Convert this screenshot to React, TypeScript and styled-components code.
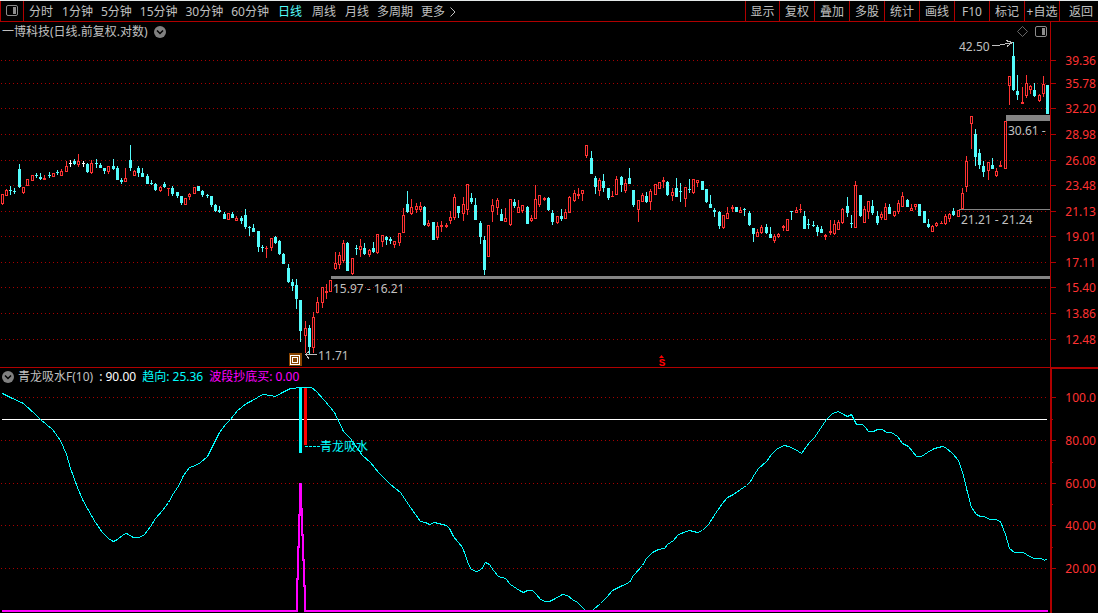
import React from "react";
import styled, { createGlobalStyle } from "styled-components";

const RED = "#b00000";
const UP = "#ff3232";
const DOWN = "#54fcfc";
const TEXT = "#c0c0c0";
const GREY = "#848484";
const CYAN = "#00ffff";
const MAGENTA = "#ff00ff";
const FONT = '"Noto Sans", "Noto Sans CJK SC", sans-serif';

const GlobalStyle = createGlobalStyle`
  *, *::before, *::after { box-sizing: border-box; }
  html, body { margin: 0; background: #000; }
  body { font-family: ${FONT}; font-size: 12px; line-height: 16px; color: ${TEXT}; }
`;

const Page = styled.div`
  display: flex;
  flex-direction: column;
  min-height: 100vh;
  background: #000;
`;

const Toolbar = styled.header`
  display: flex;
  justify-content: space-between;
  height: 22px;
  border-top: 1px solid #e4e8e8;
  border-bottom: 1px solid ${RED};
`;

const Periods = styled.nav`
  display: flex;
  align-items: stretch;
`;

const Actions = styled.div`
  display: flex;
  align-items: stretch;
`;

const BareButton = styled.button`
  appearance: none;
  display: flex;
  align-items: center;
  justify-content: center;
  margin: 0;
  padding: 0;
  border: 0;
  background: none;
  color: inherit;
  font: inherit;
  white-space: nowrap;
  cursor: pointer;
`;

const LayoutButton = styled(BareButton)`
  width: 24px;
  border-left: 1px solid ${RED};
  border-right: 1px solid ${RED};
`;

const PeriodButton = styled(BareButton)<{ $roomy?: boolean; $active?: boolean }>`
  gap: 5px;
  padding: 2px ${(p) => (p.$roomy ? 5 : 4)}px 0;
  color: ${(p) => (p.$active ? DOWN : TEXT)};
`;

const ActionButton = styled(BareButton)`
  width: 35px;
  padding-top: 2px;
  border-left: 1px solid ${RED};

  &:first-child {
    width: 34px;
  }

  &:last-child {
    width: 39px;
    padding-left: 4px;
  }
`;

const Panel = styled.section`
  display: flex;
  flex-direction: column;
`;

const PanelHeader = styled.div`
  display: grid;
  grid-template-columns: minmax(0, 1050fr) minmax(0, 48fr);
  height: 18px;
`;

const HeaderMain = styled.div<{ $lower?: boolean }>`
  display: flex;
  align-items: center;
  gap: 6px;
  padding: ${(p) => (p.$lower ? 0 : 2)}px 3px 0 2px;
  border-top: ${(p) => (p.$lower ? `1px solid ${RED}` : "0")};
  white-space: nowrap;
`;

const AxisCorner = styled.div<{ $lower?: boolean }>`
  border-left: ${(p) => (p.$lower ? 2 : 1)}px solid ${RED};
  border-top: ${(p) => (p.$lower ? `2px solid ${RED}` : "0")};
`;

const Title = styled.h1`
  margin: 0;
  font-size: 12px;
  line-height: 16px;
  font-weight: 400;
`;

const Indicator = styled.div`
  display: flex;
  align-items: center;
  gap: 4px;
`;

const IndicatorName = styled.h2`
  margin: 0;
  font-size: 12px;
  line-height: 16px;
  font-weight: 400;
`;

const Reading = styled.span<{ $color: string }>`
  color: ${(p) => p.$color};
`;

const HeaderTools = styled.div`
  display: flex;
  align-items: center;
  gap: 6px;
  margin-left: auto;
`;

const Chart = styled.svg`
  display: block;
  width: 100%;
  height: auto;
  overflow: visible;
  font-family: ${FONT};
  font-size: 12px;
`;

const Icon = styled.svg`
  display: block;
  flex: none;
`;

const PanelIcon = () => (
  <Icon width="12" height="12" viewBox="0 0 12 12" fill="none" aria-hidden="true">
    <rect x="0.5" y="0.5" width="11" height="10" rx="1.5" stroke="#8c8c8c" />
    <rect x="7" y="2" width="3" height="7" fill="#8c8c8c" />
  </Icon>
);

const FoldIcon = () => (
  <Icon width="12" height="12" viewBox="0 0 12 12" fill="none" aria-hidden="true">
    <circle cx="6" cy="6" r="6" fill="#808080" />
    <path d="M3 4.5 L6 7.5 L9 4.5" stroke="#000" strokeWidth="1.5" />
  </Icon>
);

const DiamondIcon = () => (
  <Icon width="12" height="12" viewBox="0 0 12 12" fill="none" aria-hidden="true">
    <path d="M5.5 0.5 L10.5 5.5 L5.5 10.5 L0.5 5.5 Z" stroke="#808080" strokeWidth="0.8" />
  </Icon>
);

const MoreIcon = () => (
  <Icon width="6" height="10" viewBox="0 0 6 10" fill="none" aria-hidden="true">
    <path d="M0.5 0.5 L5 5 L0.5 9.5" stroke={TEXT} />
  </Icon>
);

const periods = [
  { label: "分时", roomy: true },
  { label: "1分钟" },
  { label: "5分钟" },
  { label: "15分钟" },
  { label: "30分钟" },
  { label: "60分钟" },
  { label: "日线", roomy: true, active: true },
  { label: "周线", roomy: true },
  { label: "月线" },
  { label: "多周期" },
];

const actions = ["显示", "复权", "叠加", "多股", "统计", "画线", "F10", "标记", "+自选", "返回"];

/* One bar per entry: kind (u up, d down, w flat), x, high, body top, body bottom, low. */
const bars = `
u 2 194 194 204 205;u 6 189 190 196 196;d 10 186 190 191 195;d 14 188 191 192 194;d 19 164 169 187 188;
u 23 187 187 193 194;u 27 179 179 186 186;u 32 175 175 181 181;d 36 173 175 176 178;d 40 173 177 179 180;
u 44 175 178 180 180;d 49 172 175 176 178;u 53 173 173 177 177;d 57 170 172 173 175;u 61 169 171 176 176;
u 66 161 166 172 172;w 70 160 163 164 167;d 74 159 161 164 165;u 78 154 161 165 167;w 83 161 163 164 167;
d 87 163 164 172 173;u 91 160 163 173 174;d 96 159 163 164 168;d 100 163 165 168 168;d 104 168 168 171 174;
u 108 166 166 172 174;d 113 159 166 169 170;d 117 166 168 180 180;d 121 178 180 182 184;u 125 168 178 182 182;
d 130 145 160 168 171;u 134 170 171 176 176;d 138 166 168 173 177;d 142 168 173 177 177;d 147 174 176 184 184;
d 151 180 183 184 185;d 155 183 184 190 191;u 160 186 187 191 192;d 164 182 184 187 188;u 168 188 188 189 196;
d 172 186 188 194 196;d 177 192 192 196 198;d 181 196 196 203 205;u 185 198 198 205 205;u 189 193 194 197 200;
u 194 187 187 194 194;d 198 186 186 191 191;d 202 190 191 195 197;d 207 194 195 196 198;d 211 196 196 205 207;
d 215 204 205 211 212;d 219 206 210 212 213;d 224 212 214 219 219;u 228 213 213 220 220;d 232 212 214 218 218;
u 236 216 218 221 221;d 241 216 218 221 224;d 245 209 215 227 229;d 249 226 227 228 236;d 253 224 228 232 232;
d 258 231 231 247 252;d 262 245 247 248 252;u 266 246 248 249 258;u 271 238 238 248 251;d 275 236 237 243 244;
d 279 240 241 254 255;d 283 253 254 264 264;d 288 264 268 282 283;d 292 279 282 286 291;d 296 279 285 299 309;
d 300 300 300 331 342;u 305 321 328 336 353;d 309 325 328 347 354;u 313 312 317 348 353;u 317 297 302 313 313;
u 322 287 287 303 308;u 326 284 291 293 299;u 330 280 280 292 292;u 335 252 263 269 270;u 339 252 255 265 269;
u 343 240 243 261 263;d 347 242 243 271 271;u 352 258 258 274 275;d 356 245 248 249 255;u 360 239 246 250 257;
d 364 243 248 254 255;u 369 249 250 255 257;d 373 242 248 252 253;u 377 234 234 253 254;u 382 235 235 242 247;
d 386 236 237 240 245;d 390 237 239 241 244;u 394 241 241 245 248;u 399 233 233 243 246;u 403 208 215 233 233;
d 407 191 204 212 213;u 411 199 207 214 215;u 416 203 206 210 213;u 420 202 206 210 212;d 424 206 207 225 226;
u 428 220 223 226 227;d 433 222 222 240 240;u 437 222 226 238 240;u 441 221 225 227 232;u 446 223 225 227 228;
u 450 211 217 221 224;u 454 194 197 218 220;d 458 206 206 213 218;u 463 197 204 214 221;u 467 184 184 210 215;
d 471 193 198 202 204;d 475 198 205 220 220;d 480 221 223 237 244;d 484 236 240 270 275;u 488 225 225 257 257;
u 492 199 205 212 222;u 497 198 200 208 215;d 501 209 214 221 221;u 505 208 218 222 222;u 510 199 199 225 226;
d 514 199 202 206 208;u 518 200 207 213 213;u 522 205 205 211 213;d 527 206 207 224 224;u 531 215 218 221 222;
u 535 185 199 219 219;u 539 195 195 205 207;u 544 197 198 200 201;d 548 197 198 210 211;d 552 210 213 222 225;
u 557 216 216 223 224;d 561 209 216 219 221;u 565 209 212 219 219;u 569 196 197 213 213;u 574 190 193 201 202;
u 578 188 194 196 199;u 582 190 190 194 201;u 586 145 145 156 158;d 591 151 158 174 174;d 595 176 178 187 194;
u 599 178 180 191 196;d 603 174 181 188 192;d 608 188 188 198 200;u 612 191 196 197 197;u 616 176 179 195 195;
d 621 176 177 185 192;u 625 179 183 191 193;d 629 168 178 184 184;d 633 190 190 205 207;u 638 200 200 210 222;
u 642 193 195 202 202;d 646 192 196 202 203;u 650 189 191 202 210;u 655 184 184 195 195;u 659 182 182 189 189;
u 663 177 180 182 188;d 667 181 182 195 196;u 672 188 192 196 201;d 676 178 188 197 197;d 680 183 191 192 202;
u 685 187 187 199 207;d 689 179 189 190 193;u 693 179 179 193 194;u 697 180 180 183 187;d 702 181 181 190 190;
d 706 189 189 202 203;d 710 195 204 208 208;d 714 208 210 212 217;d 719 211 212 226 229;u 723 215 215 228 229;
u 727 207 213 219 219;u 732 205 207 209 212;d 736 207 207 212 212;u 740 207 210 213 213;d 744 208 209 210 216;
d 749 211 213 225 226;d 753 228 228 234 242;u 757 229 232 237 237;u 761 225 227 233 234;d 766 224 227 233 234;
d 770 227 234 238 238;u 774 234 236 241 243;u 778 233 234 237 238;u 783 225 226 228 231;u 787 219 219 231 231;
d 791 211 211 212 220;u 796 207 210 213 213;u 800 204 209 210 213;d 804 211 216 229 229;d 808 219 224 225 229;
d 813 221 225 226 227;d 817 225 227 232 236;d 821 226 229 233 233;u 825 234 235 237 240;u 830 220 231 233 235;
u 834 220 224 234 235;u 838 220 222 230 230;u 842 208 209 223 224;d 847 197 206 213 217;d 851 215 223 224 228;
u 855 181 185 228 228;d 860 195 195 216 217;u 864 206 209 223 223;u 868 201 201 212 219;d 872 200 206 213 215;
d 877 211 216 223 225;u 881 212 214 218 220;u 885 203 207 220 220;d 889 204 207 214 214;u 894 211 211 216 217;
u 898 200 203 212 214;u 902 192 196 207 207;d 907 199 200 207 207;u 911 204 208 211 211;u 915 204 204 207 210;
d 919 204 204 216 216;d 924 211 211 223 223;d 928 219 224 227 228;u 932 225 226 232 232;u 936 222 223 226 227;
u 941 221 223 224 224;u 945 214 216 224 225;u 949 213 214 219 222;d 953 208 211 215 216;u 958 210 210 217 217;
u 962 188 193 209 209;u 966 156 161 187 192;u 971 116 116 124 149;d 975 129 134 157 166;d 979 149 153 165 169;
d 983 161 166 172 177;u 988 162 162 171 180;d 992 158 165 169 169;u 996 168 171 176 177;u 1000 161 165 167 167;
u 1005 121 121 169 169;u 1009 76 76 86 105;d 1013 42 56 90 91;d 1017 75 91 95 100;u 1022 87 102 104 104;
u 1026 75 83 96 98;u 1030 85 86 90 94;d 1034 83 90 96 97;u 1039 94 95 101 102;u 1043 76 84 94 97;
d 1047 85 85 114 114`
  .split(";")
  .map((entry) => {
    const [kind, ...numbers] = entry.trim().split(" ");
    const [x, high, top, bottom, low] = numbers.map(Number);
    return { kind, x, high, top, bottom, low };
  });

const barColors: Record<string, string> = { u: UP, d: DOWN, w: "#ffffff" };

const Bar = ({ kind, x, high, top, bottom, low }: (typeof bars)[number]) => {
  const color = barColors[kind];
  const hollow = kind === "u" && bottom - top > 2;
  return (
    <g fill={color}>
      {top > high && <rect x={x} y={high} width="1" height={top - high} />}
      {low > bottom && <rect x={x} y={bottom} width="1" height={low - bottom} />}
      {hollow ? (
        <path
          fillRule="evenodd"
          d={`M${x - 1} ${top}h3v${bottom - top}h-3z M${x} ${top + 1}v${bottom - top - 2}h1v${-(bottom - top - 2)}z`}
        />
      ) : (
        <rect x={x - 1} y={top} width="3" height={bottom - top} />
      )}
    </g>
  );
};

const priceTicks: [string, number][] = [
  ["39.36", 60], ["35.78", 83], ["32.20", 108], ["28.98", 134], ["26.08", 160], ["23.48", 185],
  ["21.13", 211], ["19.01", 236], ["17.11", 262], ["15.40", 287], ["13.86", 313], ["12.48", 339],
];

const indicatorTicks: [string, number][] = [
  ["100.0", 397], ["80.00", 440], ["60.00", 483], ["40.00", 525], ["20.00", 568],
];

const Scale = ({ ticks, tickStart }: { ticks: [string, number][]; tickStart: number }) => (
  <>
    {ticks.map(([label, y]) => (
      <g key={label}>
        <line x1="1" x2="1048" y1={y + 0.5} y2={y + 0.5} stroke="#a80000" strokeDasharray="1 3" />
        <rect x={tickStart} y={y} width={1056 - tickStart} height="1" fill={RED} />
        <text x="1096" y={y + 5} textAnchor="end" fill={UP}>{label}</text>
      </g>
    ))}
  </>
);

const trend =
  "2,393 10,397 23,403 35,414 40,419 52,429 60,440 66,454 70,468 77,487 82,499 87,508 95,522 102,532 108,538 " +
  "111,540 113,541 117,539 123,534 126,533 133,537 139,537 144,534 150,526 155,518 162,510 168,502 173,493 " +
  "179,484 183,475 189,467 195,465 200,462 207,456 212,446 219,432 225,424 230,419 237,410 246,403 252,400 " +
  "262,394 270,395 275,396 282,392 290,388 302,387 311,387 316,391 324,400 334,412 343,431 350,438 357,448 " +
  "362,455 370,462 378,472 390,484 400,492 410,507 420,521 425,522 429,524 434,522 446,525 449,528 453,536 " +
  "462,547 465,555 468,564 471,569 476,571 481,569 485,562 489,564 493,570 498,576 505,578 510,584 519,590 " +
  "523,592 527,590 532,590 536,594 540,599 545,601 549,601 555,598 562,594 567,595 572,599 577,602 582,607 " +
  "586,611 590,611 593,609 600,603 607,596 612,590 620,586 629,582 633,575 642,565 646,558 652,552 658,549 " +
  "664,548 667,544 673,540 678,534 689,530 697,532 702,530 708,524 715,513 722,503 727,497 733,494 740,489 " +
  "746,485 750,481 754,474 758,468 766,461 771,454 777,448 784,445 788,446 795,449 801,453 809,442 814,437 " +
  "820,428 826,419 832,413 838,411 843,414 847,416 851,414 856,424 862,424 865,427 868,431 873,431 877,429 " +
  "882,429 886,432 891,432 897,436 902,443 908,446 912,451 916,456 921,456 927,452 934,448 942,446 945,447 " +
  "952,453 958,460 963,475 967,492 971,507 976,514 980,516 984,516 989,519 995,519 1000,521 1005,534 " +
  "1009,548 1014,552 1023,552 1029,556 1034,558 1041,558 1044,560 1047,558";

const PriceChart = () => (
  <Chart viewBox="0 40 1098 327" role="img" aria-label="一博科技 日线">
    <g shapeRendering="crispEdges">
      <Scale ticks={priceTicks} tickStart={1051} />
      <rect x="1050" y="40" width="1" height="327" fill={RED} />
      <rect x="331" y="276" width="719" height="3" fill={GREY} />
      <rect x="959" y="209" width="91" height="1" fill={GREY} />
      <rect x="1006" y="115" width="44" height="6" fill={GREY} />
      {bars.map((bar) => (
        <Bar key={bar.x} {...bar} />
      ))}
    </g>

    <g fill={TEXT}>
      <text x="959" y="51">42.50</text>
      <text x="1008" y="135">30.61 -</text>
      <text x="961" y="224">21.21 - 21.24</text>
      <text x="333" y="293">15.97 - 16.21</text>
      <text x="318" y="360">11.71</text>
    </g>

    <g stroke={TEXT} fill="none" shapeRendering="crispEdges">
      <path d="M992 45.5 L998 45.5 L1012 42.5 M1006 40.5 L1012 42.5 L1007 46.5" />
      <path d="M317 354.5 L306 354.5 M309 351.5 L305.5 354.5 L309 358.5" />
    </g>

    <g shapeRendering="crispEdges">
      <rect x="289" y="353" width="13" height="13" fill="#884400" />
      <path
        fill="#fff"
        fillRule="evenodd"
        d="M290 355h10v10h-10z M291 356v8h8v-8z M292 357h6v6h-6z M293 358v4h4v-4z"
      />
    </g>

    <g fill="#ff0000">
      <path d="M659 358 L661.5 355 L664 358 Z" />
      <text x="662" y="366" textAnchor="middle" fontFamily="Liberation Mono" fontSize="11" fontWeight="700">S</text>
    </g>
  </Chart>
);

const IndicatorChart = () => (
  <Chart viewBox="0 385 1098 228" role="img" aria-label="青龙吸水">
    <g shapeRendering="crispEdges">
      <Scale ticks={indicatorTicks} tickStart={1052} />
      {[419, 462, 504, 547].map((y) => (
        <rect key={y} x="1052" y={y} width="1" height="1" fill={RED} />
      ))}
      <rect x="1050" y="385" width="2" height="228" fill={RED} />
      <rect x="2" y="419" width="1045" height="1" fill="#fff" />
      <polyline points={trend} transform="translate(0.5 0.5)" fill="none" stroke={CYAN} />
      <rect x="299" y="387" width="3" height="66" fill={CYAN} />
      <rect x="304" y="388" width="3" height="57" fill="#ff0000" />
      <line x1="305" x2="320" y1="446.5" y2="446.5" stroke={CYAN} strokeDasharray="3 1" />
      <path
        d="M2 611 H297 V579 H298 V547 H299 V515 H300 V484 H301 V509 H302 V535 H303 V560 H304 V586 H305 V611 H1048"
        fill="none"
        stroke={MAGENTA}
        strokeWidth="2"
      />
    </g>
    <text x="320" y="451" fill={CYAN}>青龙吸水</text>
  </Chart>
);

export default function App() {
  return (
    <Page>
      <GlobalStyle />
      <Toolbar>
        <Periods aria-label="周期">
          <LayoutButton type="button" aria-label="侧栏">
            <PanelIcon />
          </LayoutButton>
          {periods.map(({ label, roomy, active }) => (
            <PeriodButton key={label} type="button" $roomy={roomy} $active={active} aria-pressed={!!active}>
              {label}
            </PeriodButton>
          ))}
          <PeriodButton type="button">
            更多
            <MoreIcon />
          </PeriodButton>
        </Periods>
        <Actions>
          {actions.map((label) => (
            <ActionButton key={label} type="button">{label}</ActionButton>
          ))}
        </Actions>
      </Toolbar>

      <main>
        <Panel>
          <PanelHeader>
            <HeaderMain>
              <Title>一博科技(日线.前复权.对数)</Title>
              <BareButton type="button" aria-label="展开">
                <FoldIcon />
              </BareButton>
              <HeaderTools>
                <BareButton type="button" aria-label="标注">
                  <DiamondIcon />
                </BareButton>
                <BareButton type="button" aria-label="右侧栏">
                  <PanelIcon />
                </BareButton>
              </HeaderTools>
            </HeaderMain>
            <AxisCorner />
          </PanelHeader>
          <PriceChart />
        </Panel>

        <Panel>
          <PanelHeader>
            <HeaderMain $lower>
              <Indicator>
                <BareButton type="button" aria-label="指标菜单">
                  <FoldIcon />
                </BareButton>
                <IndicatorName>青龙吸水F(10)</IndicatorName>
              </Indicator>
              <Reading $color="#ffffff">: 90.00</Reading>
              <Reading $color={CYAN}>趋向: 25.36</Reading>
              <Reading $color={MAGENTA}>波段抄底买: 0.00</Reading>
            </HeaderMain>
            <AxisCorner $lower />
          </PanelHeader>
          <IndicatorChart />
        </Panel>
      </main>
    </Page>
  );
}
